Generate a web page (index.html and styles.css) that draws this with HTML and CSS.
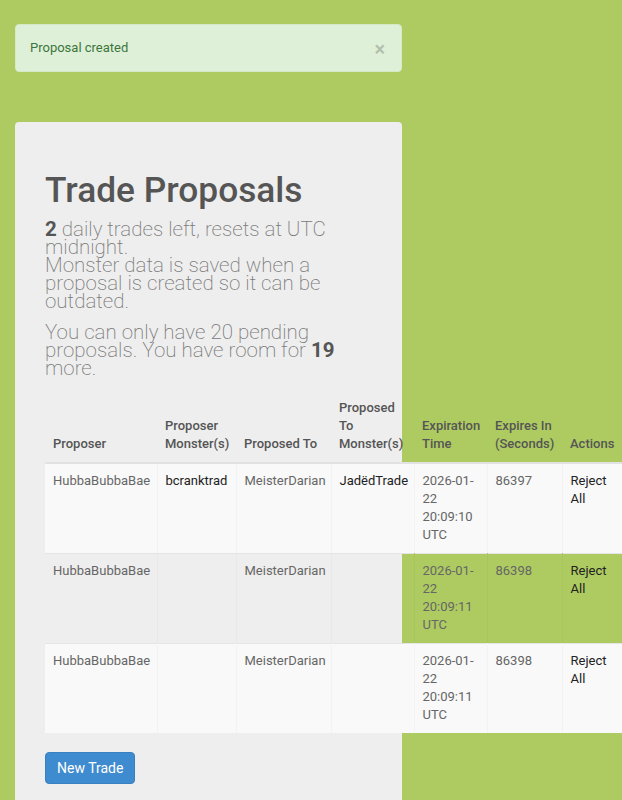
FILE: index.html
```html
<!DOCTYPE html>
<html>
<head>
<meta charset="utf-8">
<link rel="stylesheet" href="styles.css">
</head>
<body>
<div class="page">
  <div class="alert">
    <span>Proposal created</span>
    <span class="close">×</span>
  </div>
  <div class="card">
    <h1>Trade Proposals</h1>
    <p class="lead"><b>2</b> daily trades left, resets at UTC midnight.<br>Monster data is saved when a proposal is created so it can be outdated.</p>
    <p class="lead lead-last">You can only have 20 pending proposals. You have room for <b>19</b> more.</p>
    <table class="trades">
      <colgroup>
        <col class="c1"><col class="c2"><col class="c3"><col class="c4"><col class="c5"><col class="c6"><col class="c7">
      </colgroup>
      <thead>
        <tr>
          <th>Proposer</th>
          <th>Proposer Monster(s)</th>
          <th>Proposed To</th>
          <th>Proposed To Monster(s)</th>
          <th>Expiration Time</th>
          <th>Expires In (Seconds)</th>
          <th>Actions</th>
        </tr>
      </thead>
      <tbody>
        <tr class="striped">
          <td>HubbaBubbaBae</td>
          <td class="dark">bcranktrad</td>
          <td>MeisterDarian</td>
          <td class="dark">JadëdTrade</td>
          <td>2026-01-22 20:09:10 UTC</td>
          <td>86397</td>
          <td class="dark">Reject All</td>
        </tr>
        <tr>
          <td>HubbaBubbaBae</td>
          <td class="dark"></td>
          <td>MeisterDarian</td>
          <td class="dark"></td>
          <td>2026-01-22 20:09:11 UTC</td>
          <td>86398</td>
          <td class="dark">Reject All</td>
        </tr>
        <tr class="striped">
          <td>HubbaBubbaBae</td>
          <td class="dark"></td>
          <td>MeisterDarian</td>
          <td class="dark"></td>
          <td>2026-01-22 20:09:11 UTC</td>
          <td>86398</td>
          <td class="dark">Reject All</td>
        </tr>
      </tbody>
    </table>
    <button class="btn">New Trade</button>
  </div>
</div>
</body>
</html>
```

FILE: styles.css
```css
html, body {
  margin: 0;
  padding: 0;
}
body {
  background: #aecb61;
  font-family: Roboto, "Liberation Sans", sans-serif;
  font-size: 13px;
  color: #666;
  overflow: hidden;
}
.page {
  padding: 24px 0 0 15px;
  width: 387px;
}
.alert {
  display: flex;
  justify-content: space-between;
  align-items: flex-start;
  background: #dff0d8;
  border: 1px solid #d6e9c6;
  border-radius: 4px;
  color: #3c763d;
  font-size: 13px;
  line-height: 18px;
  padding: 14px;
  margin-bottom: 50px;
}
.close {
  font-size: 20px;
  font-weight: 700;
  line-height: 16px;
  padding-top: 2px;
  color: #000;
  opacity: 0.2;
  margin-right: 2px;
}
.card {
  background: #eeeeee;
  border-radius: 4px;
  padding: 30px 30px 40px 30px;
  height: 800px;
}
h1 {
  font-size: 35.3px;
  font-weight: 500;
  line-height: 1.1;
  color: #555;
  margin: 19px 0 10px 0;
}
.lead {
  font-size: 20.5px;
  font-weight: 200;
  line-height: 18px;
  color: #7a7a7a;
  margin: 0 0 13px 0;
}
.lead b {
  font-weight: 700;
  color: #555;
}
.lead-last {
  margin-bottom: 14px;
}
.trades {
  border-collapse: collapse;
  table-layout: fixed;
  width: 577px;
  margin-bottom: 19px;
  font-size: 13px;
  line-height: 18.25px;
}
.c1 { width: 112px; }
.c2 { width: 79px; }
.c3 { width: 95px; }
.c4 { width: 83px; }
.c5 { width: 73px; }
.c6 { width: 75px; }
.c7 { width: 60px; }
.trades th {
  text-align: left;
  vertical-align: bottom;
  font-weight: 500;
  color: #555;
  padding: 8px;
  border-bottom: 2px solid #e2e2e2;
}
.trades td {
  vertical-align: top;
  padding: 8px;
  color: #666;
  border-top: 1px solid #e4e4e4;
  border-left: 1px solid rgba(0, 0, 0, 0.025);
}
.trades td:first-child {
  border-left: none;
}
.trades tbody tr:first-child td {
  border-top: none;
}
.trades td.dark {
  color: #222;
}
.trades tr.striped td {
  background: #f9f9f9;
}
.btn {
  font-family: Roboto, "Liberation Sans", sans-serif;
  font-size: 14px;
  line-height: 20px;
  color: #fff;
  background: #3f8bcf;
  border: 1px solid #3a80c0;
  border-radius: 4px;
  padding: 5px 11px;
  cursor: pointer;
}
```
